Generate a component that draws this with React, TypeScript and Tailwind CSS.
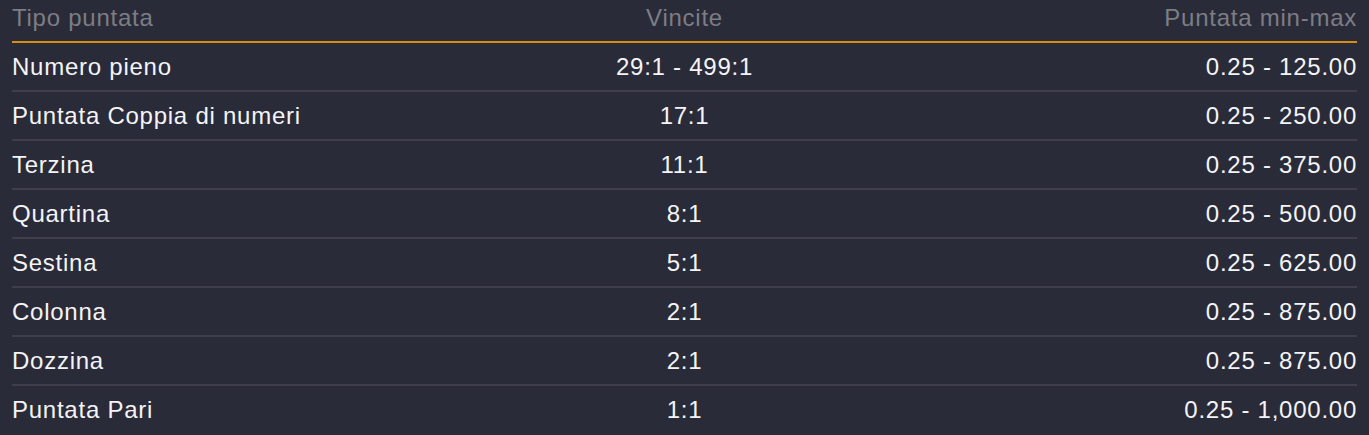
const rows = [
  { type: 'Numero pieno', payout: '29:1 - 499:1', limits: '0.25 - 125.00' },
  { type: 'Puntata Coppia di numeri', payout: '17:1', limits: '0.25 - 250.00' },
  { type: 'Terzina', payout: '11:1', limits: '0.25 - 375.00' },
  { type: 'Quartina', payout: '8:1', limits: '0.25 - 500.00' },
  { type: 'Sestina', payout: '5:1', limits: '0.25 - 625.00' },
  { type: 'Colonna', payout: '2:1', limits: '0.25 - 875.00' },
  { type: 'Dozzina', payout: '2:1', limits: '0.25 - 875.00' },
  { type: 'Puntata Pari', payout: '1:1', limits: '0.25 - 1,000.00' },
];

export default function App() {
  return (
    <div className="min-h-screen bg-[#2a2b38] px-3 font-['Liberation_Sans',Arial,sans-serif] text-[24px] tracking-[0.75px]">
      <table className="w-full table-fixed border-collapse">
        <thead>
          <tr className="h-[42px] border-b-2 border-[#d98b12] text-[#7c7d85]">
            <th className="pb-[5px] text-left font-normal">Tipo puntata</th>
            <th className="pb-[5px] text-center font-normal">Vincite</th>
            <th className="pb-[5px] text-right font-normal">Puntata min-max</th>
          </tr>
        </thead>
        <tbody>
          {rows.map((row, i) => (
            <tr
              key={row.type}
              className={`h-[49px] text-[#f4f4f6] ${i < rows.length - 1 ? 'border-b-2 border-[#3e3f4b]' : ''}`}
            >
              <td className="text-left">{row.type}</td>
              <td className="text-center">{row.payout}</td>
              <td className="text-right">{row.limits}</td>
            </tr>
          ))}
        </tbody>
      </table>
    </div>
  );
}
